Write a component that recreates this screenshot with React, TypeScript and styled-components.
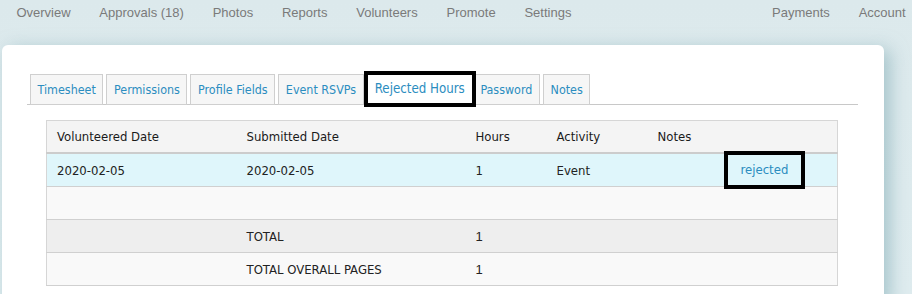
import React from 'react';
import styled, { createGlobalStyle } from 'styled-components';

const GlobalStyle = createGlobalStyle`
  html, body {
    margin: 0;
    padding: 0;
    background: #dbe9ec;
  }
  body {
    width: 912px;
    height: 294px;
    overflow: hidden;
  }
`;

const navLeft = ['Overview', 'Approvals (18)', 'Photos', 'Reports', 'Volunteers', 'Promote', 'Settings'];
const navRight = ['Payments', 'Account'];
const tabs = ['Timesheet', 'Permissions', 'Profile Fields', 'Event RSVPs', 'Rejected Hours', 'Password', 'Notes'];

type Row = {
  volunteered: string;
  submitted: string;
  hours: string;
  activity: string;
  notes: string;
  status?: string;
};

const rows: Row[] = [
  { volunteered: '2020-02-05', submitted: '2020-02-05', hours: '1', activity: 'Event', notes: '', status: 'rejected' },
];

const App: React.FC = () => (
  <Page>
    <GlobalStyle />
    <TopNav>
      <NavGroup>
        {navLeft.map((item) => (
          <NavItem key={item}>{item}</NavItem>
        ))}
      </NavGroup>
      <NavGroup right>
        {navRight.map((item) => (
          <NavItem key={item}>{item}</NavItem>
        ))}
      </NavGroup>
    </TopNav>
    <Card>
      <TabStrip>
        {tabs.map((tab) => (
          <Tab key={tab} active={tab === 'Rejected Hours'}>
            {tab}
          </Tab>
        ))}
      </TabStrip>
      <HoursTable>
        <colgroup>
          <col style={{ width: 190 }} />
          <col style={{ width: 229 }} />
          <col style={{ width: 81 }} />
          <col style={{ width: 101 }} />
          <col style={{ width: 70 }} />
          <col />
        </colgroup>
        <thead>
          <tr>
            <HeadCell>Volunteered Date</HeadCell>
            <HeadCell>Submitted Date</HeadCell>
            <HeadCell>Hours</HeadCell>
            <HeadCell>Activity</HeadCell>
            <HeadCell>Notes</HeadCell>
            <HeadCell />
          </tr>
        </thead>
        <tbody>
          {rows.map((row) => (
            <BodyRow key={row.volunteered} variant="highlight">
              <Cell>{row.volunteered}</Cell>
              <Cell>{row.submitted}</Cell>
              <Cell>{row.hours}</Cell>
              <Cell>{row.activity}</Cell>
              <Cell>{row.notes}</Cell>
              <Cell>
                <StatusLink href="#">{row.status}</StatusLink>
              </Cell>
            </BodyRow>
          ))}
          <BodyRow variant="plain">
            <Cell colSpan={6} />
          </BodyRow>
          <BodyRow variant="total">
            <Cell />
            <Cell>TOTAL</Cell>
            <NumberCell>1</NumberCell>
            <Cell colSpan={3} />
          </BodyRow>
          <BodyRow variant="plain">
            <Cell />
            <Cell>TOTAL OVERALL PAGES</Cell>
            <NumberCell>1</NumberCell>
            <Cell colSpan={3} />
          </BodyRow>
        </tbody>
      </HoursTable>
    </Card>
  </Page>
);

export default App;

const Page = styled.div`
  width: 912px;
  height: 294px;
  background: linear-gradient(to bottom, #dce9ec 0%, #dfecef 100%);
`;

const TopNav = styled.nav`
  display: flex;
  align-items: center;
  justify-content: space-between;
  height: 25px;
  padding-left: 2px;
  font-family: 'Liberation Sans', Arial, sans-serif;
  font-size: 13px;
  color: #7a7a7a;
`;

const NavGroup = styled.div<{ right?: boolean }>`
  display: flex;
  margin-right: ${({ right }) => (right ? '-8px' : '0')};
`;

const NavItem = styled.a`
  padding: 0 14.4px;
  line-height: 25px;
  white-space: nowrap;
  cursor: pointer;
`;

const Card = styled.section`
  margin: 20px 0 0 2px;
  width: 882px;
  height: 260px;
  box-sizing: border-box;
  padding: 29px 26px 0 25px;
  background: #ffffff;
  border-radius: 6px;
  box-shadow: 6px 4px 18px rgba(120, 165, 175, 0.55);
`;

const TabStrip = styled.div`
  display: flex;
  align-items: flex-end;
  gap: 3px;
  height: 30px;
  padding-left: 3px;
  border-bottom: 1px solid #c8c8c8;
`;

const Tab = styled.div<{ active?: boolean }>`
  display: flex;
  align-items: center;
  box-sizing: border-box;
  height: ${({ active }) => (active ? '36px' : '31px')};
  margin-bottom: ${({ active }) => (active ? '-3px' : '-1px')};
  margin-left: ${({ active }) => (active ? '-3px' : '0')};
  margin-right: ${({ active }) => (active ? '-6px' : '0')};
  padding: ${({ active }) => (active ? '0 7px 2px' : '0 6.6px')};
  border: ${({ active }) => (active ? '4px solid #000000' : '1px solid #cfcfcf')};
  background: ${({ active }) => (active ? '#ffffff' : '#f6f6f6')};
  font-family: 'DejaVu Sans Condensed', 'DejaVu Sans', sans-serif;
  font-size: ${({ active }) => (active ? '13.2px' : '12.4px')};
  color: #2b8dc0;
  white-space: nowrap;
  position: relative;
  z-index: ${({ active }) => (active ? 1 : 0)};
`;

const HoursTable = styled.table`
  margin: 15px 20px 0 19px;
  width: 792px;
  border-collapse: collapse;
  table-layout: fixed;
  border: 1px solid #d6d6d6;
  font-family: 'DejaVu Sans Condensed', 'DejaVu Sans', sans-serif;
  font-size: 13px;
  color: #222222;
`;

const HeadCell = styled.th`
  height: 31px;
  padding: 0 10px;
  text-align: left;
  font-weight: normal;
  color: #1a1a1a;
  background: #f4f4f4;
  border-bottom: 2px solid #cccccc;
`;

const rowColors = {
  highlight: '#dff6fb',
  plain: '#f9f9f9',
  total: '#eeeeee',
};

const BodyRow = styled.tr<{ variant: keyof typeof rowColors }>`
  background: ${({ variant }) => rowColors[variant]};
  border-bottom: 1px solid #d0d0d0;
`;

const Cell = styled.td`
  height: 32px;
  padding: 0 10px;
  white-space: nowrap;
`;

const NumberCell = styled(Cell)`
  font-family: 'Liberation Sans', Arial, sans-serif;
`;

const StatusLink = styled.a`
  display: inline-block;
  vertical-align: middle;
  padding: 4px 13px;
  color: #2b8dc0;
  text-decoration: none;
  outline: 4px solid #000000;
  line-height: 22px;
`;
